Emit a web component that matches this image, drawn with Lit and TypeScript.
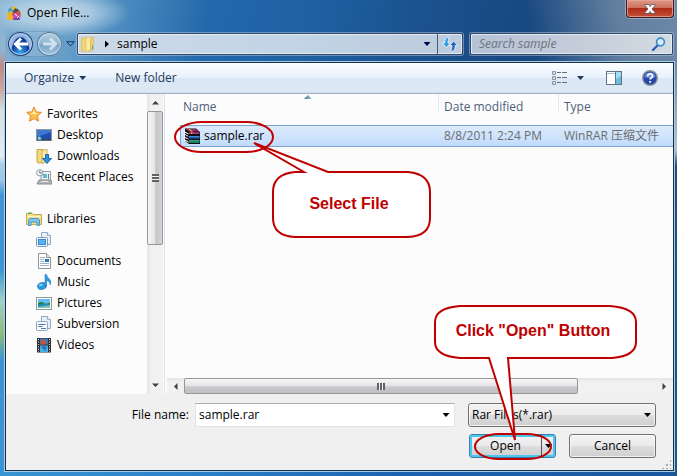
import { LitElement, html, css, svg } from "lit";
import { customElement, property, state } from "lit/decorators.js";

type Place = { icon: string; label: string; root?: boolean; gap?: boolean };

const places: Place[] = [
  { icon: "star", label: "Favorites", root: true },
  { icon: "desktop", label: "Desktop" },
  { icon: "downloads", label: "Downloads" },
  { icon: "recent", label: "Recent Places" },
  { icon: "libraries", label: "Libraries", root: true, gap: true },
  { icon: "library", label: "" },
  { icon: "documents", label: "Documents" },
  { icon: "music", label: "Music" },
  { icon: "pictures", label: "Pictures" },
  { icon: "subversion", label: "Subversion" },
  { icon: "videos", label: "Videos" },
];

const glyphs: Record<string, unknown> = {
  app: svg`
    <path d="M2 5q3-5 8-3l3 3-3 4-7 1z" fill="#3fa0dc"/>
    <path d="M6 2q4-2 5 1l-2 2-4-1z" fill="#e8c33a"/>
    <path d="M1 8l4-2 4 3v6H1z" fill="#e9b22e"/>
    <path d="M9 3l5 3-4 6-4-2z" fill="#5b4630"/>
    <path d="M7 8l4-1 4 4-3 4H7z" fill="#d44fa8"/>
    <path d="M8 13l5-1 1 3H7z" fill="#7c3fb0"/>
    <path d="M12 5l3 3-1 3-3-3z" fill="#d9572b"/>
    <path d="M9 9l2 2M11 13l2-2" stroke="#fff" stroke-width="1"/>`,
  star: svg`
    <path d="M8 1l2.100 4.900 5.200.5-3.900 3.500 1.100 5.300L8 12.500l-4.500 2.700 1.100-5.300L.7 6.400l5.200-.5z" fill="#fcc046" stroke="#e2842c" stroke-linejoin="round"/>
    <path d="M8 3l1.400 3.700 3.800.5L8 8.500 3 7.200l3.700-.5z" fill="#ffe9a0"/>`,
  desktop: svg`
    <rect x="0.5" y="2.500" width="15" height="11" fill="#b8c4d0" stroke="#8a97a5"/>
    <rect x="1" y="3" width="14" height="9" fill="#1f4fae"/>
    <path d="M1 3h14v2L1 10z" fill="#3f78d2"/>
    <path d="M1 12h14v1.500H1z" fill="#31455f"/>
    <circle cx="3.500" cy="11.500" r="2" fill="#4fb0e8"/><circle cx="3" cy="11" r="1" fill="#f4d13a"/>`,
  downloads: svg`
    <path d="M1 1.500h6l1 1v12l-6 .5-1-1z" fill="#f3d97e" stroke="#c9a546"/>
    <path d="M6 2.500l5-1v12l-5 2z" fill="#fae9a8" stroke="#cfae54"/>
    <path d="M9.500 6.500h3v4H15.500L11 15.500 6.500 10.500h3z" fill="#2e92e0" stroke="#1766ae"/>`,
  recent: svg`
    <path d="M5 2.500h9.500v9H5z" fill="#e7f0f3" stroke="#92a0a8"/>
    <path d="M7 5h4v4H7z" fill="#62b6cf"/><path d="M12 5h1v5h-1z" fill="#6d8792"/>
    <path d="M3 11h12l1 4H1z" fill="#b1b5b8" stroke="#878b8f"/>
    <path d="M5 12.500h7" stroke="#e6e8ea"/>
    <circle cx="3.800" cy="3.800" r="3.200" fill="#f6f8f9" stroke="#8b979e"/>
    <path d="M3.800 1.800v2.200h2" stroke="#5b6c77" fill="none"/>`,
  libraries: svg`
    <path d="M.5 2.500h6l1 1h8v10H.5z" fill="#f3dd8c" stroke="#c8a850"/>
    <path d="M2 1.500h4v1.500H2z" fill="#54b648"/>
    <path d="M1 5.500h14" stroke="#fff4c8"/>
    <path d="M2.500 14.500V10q0-2.500 2.500-2.500h6q2.500 0 2.500 2.500v4.500H11V11H5v3.500z" fill="#7fcbee" stroke="#4495c4"/>`,
  library: svg`
    <path d="M5.500.5h6l3 3v9h-9z" fill="#e8f0f7" stroke="#91a9c3"/>
    <path d="M11.500.5v3h3" fill="#fff" stroke="#91a9c3"/>
    <rect x=".5" y="5.500" width="11" height="9" rx="1" fill="#f0f6fb" stroke="#7c9abc"/>
    <rect x="2.500" y="7.500" width="7" height="5" fill="#5cb4f0" stroke="#3687cc"/>`,
  documents: svg`
    <path d="M2.500.5h8l4 4v11h-12z" fill="#fff" stroke="#8e9498"/>
    <path d="M10.500.5v4h4" fill="#e2e6e8" stroke="#8e9498"/>
    <path d="M4 4.500h5M4 6.500h4M4 8.500h4M4 10.500h9M4 12.500h9" stroke="#9fb2c8"/>
    <rect x="9" y="6" width="4" height="3" fill="#2f78b8"/>`,
  music: svg`
    <ellipse cx="6" cy="12" rx="4.500" ry="3.400" transform="rotate(-15 6 12)" fill="#2a9ae2" stroke="#1a70b4" stroke-width=".6"/>
    <path d="M9 .5h1.500q.5 3 3 4.500 2.500 2.500.5 6 .3-3.500-3.500-4.500V12H9z" fill="#2f9ee4" stroke="#1a70b4" stroke-width=".5"/>
    <ellipse cx="4.800" cy="11" rx="2" ry="1" fill="#8fd3f8"/>`,
  pictures: svg`
    <rect x=".5" y="2.500" width="15" height="12" fill="#fff" stroke="#90989e"/>
    <rect x="2" y="4" width="12" height="9" fill="#64bdf0"/>
    <path d="M2 8q3-2 6 0t6-1v2H2z" fill="#2f7d52"/>
    <path d="M2 9h12v4H2z" fill="#2389ae"/><path d="M2 12l12-2v3H2z" fill="#79c6a8"/>`,
  subversion: svg`
    <path d="M5.500.5h6l3 3v9h-9z" fill="#e8f0f7" stroke="#91a9c3"/>
    <path d="M11.500.5v3h3" fill="#fff" stroke="#91a9c3"/>
    <rect x=".5" y="5.500" width="11" height="9" rx="1" fill="#f4f8fc" stroke="#8ea8c6"/>
    <path d="M2.500 8.500h7M2.500 10.500h4M5 12.500h5" stroke="#5673ac"/>`,
  videos: svg`
    <rect x="1" y="1" width="14" height="14.500" fill="#2a2f35"/>
    <rect x="4" y="1.500" width="8" height="6" fill="#3f78b8"/><rect x="4" y="8.500" width="8" height="6.500" fill="#49b0ea"/>
    <path d="M6 2l5 3-2 2.500H4z" fill="#c0583c"/><path d="M5 10q3-2 6 0l-2 4z" fill="#2e74b4"/>
    <path d="M2.500 2v13M13.500 2v13" stroke="#e8ecef" stroke-dasharray="1 1.500"/>`,
  folder: svg`
    <path d="M.5 2.500L5.500 1v14l-4 .5-1-1z" fill="#f0d472" stroke="#d8b85a" stroke-width=".7"/>
    <path d="M5 2l4.500-1v13L5 15.500z" fill="#fbeaa4" stroke="#dcbf68" stroke-width=".7"/>
    <path d="M9.500 2.500l3-1.500v12.500L8 15.500l1.500-2z" fill="#f0d26c" stroke="#d8b85a" stroke-width=".7"/>
    <path d="M11.500 9.500v4" stroke="#4ca0d8"/>`,
  rar: svg`
    <path d="M1 .5h11l4 3.500v12H5L1 13z" fill="#101014"/>
    <path d="M1.500 1H11l4 2.500H5z" fill="#a0246e"/>
    <path d="M5 4.200h10.500v1.800H5z" fill="#b02c7c"/>
    <path d="M0 3l4.500 2.500v1L0 4.200zM0 5.500L4.500 8v.800L0 6.500zM0 8.300l4.500 2.500v.800L0 9.500zM0 11l4.500 2.500v1L0 12.200z" fill="#fff"/>
    <path d="M5 8h10.500v2.600H5z" fill="#1c5cb0"/><path d="M5 8h10.500v.6H5z" fill="#64a4dc"/>
    <path d="M5 12.400h10.500v2.600H5z" fill="#128464"/><path d="M5 12.400h10.500v.6H5z" fill="#68ccac"/>
    <path d="M4.500 1h1.500l3 2.500H7z" fill="#e0b83c"/><path d="M7 4.200h1.500V6H7z" fill="#e0b83c"/>`,
  refresh: svg`
    <path d="M6.500 1q-3.800.5-3.800 6H.2L4.500 11.500l4-4.500H6q0-3 1.200-6z" fill="#2f9fe0" stroke="#f4f9fd" stroke-width=".8"/>
    <path d="M9.500 15.500q3.800-.5 3.800-6h2.500L11.500 5l-4 4.500H10q0 3-1.200 6z" fill="#2367b8" stroke="#f4f9fd" stroke-width=".8"/>`,
  search: svg`
    <path d="M6.500 9.500L2 14" stroke="#2a5fae" stroke-width="2.400" stroke-linecap="round"/>
    <circle cx="9.500" cy="6" r="3.900" fill="#dcecf8" stroke="#3a8bcc" stroke-width="1.700"/>`,
  views: svg`
    <path d="M1.500 1.500h3v3h-3zM1.500 6.500h3v3h-3zM1.500 11.500h3v3h-3z" fill="#fff" stroke="#8797a8"/>
    <path d="M2.500 3h1M2.500 13h1" stroke="#4b78a8"/><path d="M2.500 8h1" stroke="#c8462e"/>
    <path d="M6 2.500h4M11 2.500h5M6 7.500h4M11 7.500h5M6 12.500h4M11 12.500h5" stroke="#5c6f85"/>`,
  pane: svg`
    <rect x=".5" y="1.500" width="15" height="13" fill="#fff" stroke="#5f7488"/>
    <path d="M1 3.500h14" stroke="#a9b8c6"/><rect x="10" y="2" width="5" height="12" fill="#6fbbdc"/>
    <path d="M10 2h5v4l-5 3z" fill="#a6dcef"/><path d="M9.500 2v12" stroke="#4e7e9c"/>`,
  help: svg`
    <circle cx="8" cy="8" r="7.300" fill="#2848a8" stroke="#8d94a0" stroke-width="1.400"/>
    <path d="M2.500 7a5.600 5.600 0 0 1 11 0q-5 2.500-11 0z" fill="#6c8ce0"/>
    <path d="M5.700 6.300q0-2.500 2.400-2.500t2.400 2.100q0 1.300-1.300 2-1 .6-1 1.700" fill="none" stroke="#fff" stroke-width="1.700"/>
    <path d="M7.200 11h1.900v1.700H7.200z" fill="#fff"/>`,
};

@customElement("ui-icon")
class UiIcon extends LitElement {
  @property() name = "";
  static styles = css`
    :host { display: block; flex: none; width: 16px; height: 16px; }
    .glyph { display: block; width: 100%; height: 100%; }
  `;
  render() {
    return html`<svg class="glyph" viewBox="0 0 16 16" aria-hidden="true">${glyphs[this.name]}</svg>`;
  }
}

@customElement("ui-scrollbar")
class UiScrollbar extends LitElement {
  @property({ reflect: true }) direction = "vertical";
  static styles = css`
    :host { display: flex; flex: none; background: linear-gradient(90deg, #e6e6e6, #f1f1f1 30%, #f1f1f1); }
    :host([direction="vertical"]) { flex-direction: column; width: 16px; }
    :host([direction="horizontal"]) { height: 16px; background: linear-gradient(#e6e6e6, #f1f1f1 30%, #f1f1f1); }
    .end { flex: none; width: 16px; height: 17px; display: grid; place-items: center; }
    :host([direction="horizontal"]) .end { width: 17px; height: 16px; }
    .arrow { display: block; width: 7px; height: 7px; fill: #404040; }
    .thumb { box-sizing: border-box; border: 1px solid #979797; border-radius: 2px; display: grid; place-items: center;
      flex: 1; background: linear-gradient(90deg, #f6f6f6, #e4e4e6 50%, #c4c5c9 55%, #d2d3d6); }
    :host([direction="horizontal"]) .thumb { flex: 5; background: linear-gradient(#f6f6f6, #e4e4e6 50%, #c8c9cc 55%, #c0c1c5); }
    .rest { flex: 1; }
    .grip { width: 7px; height: 8px; background: repeating-linear-gradient(#606266 0 2px, #f4f4f4 2px 3px); }
    :host([direction="horizontal"]) .grip { width: 8px; height: 7px; background: repeating-linear-gradient(90deg, #606266 0 2px, #f4f4f4 2px 3px); }
  `;
  render() {
    const v = this.direction === "vertical";
    return html`
      <div class="end"><svg class="arrow" viewBox="0 0 7 7"><path d=${v ? "M0 5.500L3.500 2 7 5.500z" : "M5.500 0L2 3.500 5.500 7z"} /></svg></div>
      <div class="thumb"><div class="grip"></div></div>
      <div class="rest"></div>
      <div class="end"><svg class="arrow" viewBox="0 0 7 7"><path d=${v ? "M0 1.500L3.500 5 7 1.500z" : "M1.500 0L5 3.500 1.500 7z"} /></svg></div>`;
  }
}

@customElement("app-root")
class AppRoot extends LitElement {
  @state() fileName = "sample.rar";

  static styles = css`
    :host {
      position: relative; box-sizing: border-box; display: flex; flex-direction: column; min-height: 100vh;
      padding: 0 2px 4px 4px; font: 12px/20px "Open Sans", "Noto Sans CJK SC", sans-serif; color: #000;
      background:
        linear-gradient(#7fb0d000 0, #8fb6d0 50px, #c08a88 66px, #c9a8a4 90px, #d4dfe2 110px, #e4eef2 155px, #a9cde8 165px, #9cc6e6 180px, #3f97d4 195px, #3c96d2 270px, #9fd0c8 300px, #8fb87c 335px, #3c94d0 360px, #3a94d4 100%) 0 0 / 5px 100% no-repeat,
        linear-gradient(#6c88a800 0, #6c88a8 60px, #8ca0b8 100px, #b4c2d0 150px, #1b4d84 166px, #1c5694 100%) 100% 0 / 4px 100% no-repeat,
        linear-gradient(90deg, #3a94d4, #2a80c8 30%, #1c62b0 60%, #1a58a0) 0 100% / 100% 6px no-repeat,
        radial-gradient(ellipse 75px 24px at 55px 13px, #c8dcea, #bcd6e8c0 50%, #b4d2e800),
        linear-gradient(258deg, #6c88a8 0, #64809f 60px, #64809f00 150px),
        linear-gradient(98deg, #86b2d2 0, #5c98c6 90px, #2268ab 210px, #1f62a4 300px, #1b5492 400px, #184880 520px, #1b4a82 100%);
    }
    button, input, select { font: inherit; color: inherit; margin: 0; padding: 0; }
    button { background: none; border: 0; }
    .titlebar { display: flex; justify-content: space-between; height: 32px; padding-left: 2px; }
    .title { display: flex; align-items: center; gap: 5px; height: 26px; margin: 0; font-size: 12px; font-weight: 400; }
    .close { box-sizing: border-box; width: 48px; height: 18px; display: grid; place-items: center; border: 1px solid #3c1d28; border-top: 0;
      border-radius: 0 0 4px 4px; box-shadow: inset 0 0 0 1px #e8a898c0, 0 0 0 1px #c4d0dc80;
      background: linear-gradient(#dc9a8c, #cc6c58 48%, #b02c16 50%, #c45038); margin-right: 1px; }
    .cross { width: 12px; height: 10px; }
    .navbar { display: flex; align-items: center; height: 24px; padding: 0 2px 5px 3px; }
    .travel { display: flex; box-sizing: border-box; gap: 4px; height: 24px; width: 56px; padding: 0 1px; border-radius: 12px; background: #a8c8e050; box-shadow: 0 0 0 1px #5d8fb880; }
    .round { box-sizing: border-box; width: 25px; height: 24px; border-radius: 50%; display: grid; place-items: center; border: 1px solid #1c3c78; }
    .back { background: radial-gradient(ellipse at 50% 100%, #38b4f4, #1450a8 45%, #0c3088 55%, #8cb0e0 60%, #c4d8f0); box-shadow: inset 0 0 0 1px #b4d0ec; }
    .forward { background: linear-gradient(#b4cee0, #90b4d0 50%, #78a4c8 52%, #a0c4dc); border-color: #5a7c9c; box-shadow: inset 0 0 0 1px #c8dcec; }
    .arrow { width: 16px; height: 16px; }
    .history { width: 14px; height: 20px; display: grid; place-items: center; }
    .tri { display: block; width: 7px; height: 4px; background: currentColor; clip-path: polygon(0 0, 100% 0, 50% 100%); }
    .outline { width: 9px; height: 6px; }
    .field { box-sizing: border-box; height: 22px; border: 1px solid #34496a; border-radius: 2px; display: flex; align-items: center;
      background: linear-gradient(90deg, #ccd9e7, #c3d5e6 50%, #bccbdd); box-shadow: 0 0 0 1px #b4cce480, inset 0 0 0 1px #eef4fac0; }
    .address { flex: 1; margin-right: 7px; padding-left: 3px; }
    .crumb { display: flex; align-items: center; gap: 8px; flex: 1; }
    .step { width: 4px; height: 7px; background: #000; clip-path: polygon(0 0, 100% 50%, 0 100%); }
    .drop { width: 20px; height: 20px; display: grid; place-items: center; color: #000050; }
    .refresh { box-sizing: border-box; width: 25px; height: 20px; border-left: 1px solid #4a5a78; display: grid; place-items: center; }
    .search { width: 203px; padding: 0 5px 0 8px; background: linear-gradient(90deg, #b4c2d6, #c4ccd9 50%, #d2dae2); }
    .query { flex: 1; min-width: 0; border: 0; background: none; outline: 0; font-style: italic; }
    .query::placeholder { color: #6c747c; opacity: 1; }
    .client { flex: 1; display: flex; flex-direction: column; border: 1px solid #16304c; box-shadow: 0 0 0 1px #a8cce4; background: #f0f0f0; margin: 1px 1px 1px; }
    .toolbar { display: flex; align-items: center; height: 30px; padding: 0 15px 0 18px; color: #1e395b; border-bottom: 1px solid #a0b0c8;
      background: linear-gradient(#fcfeff, #e8f2fc 49%, #dce7f5 50%, #dde8f5 94%, #cfdcec); }
    .organize { display: flex; align-items: center; gap: 5px; margin-right: 29px; }
    .spacer { flex: 1; }
    .views { display: flex; align-items: center; gap: 10px; margin-right: 22px; }
    .preview { margin-right: 20px; }
    .panes { flex: 1; display: flex; background: #fcfcfc; }
    .places { width: 141px; box-sizing: border-box; margin: 0; padding: 9px 0 0 20px; list-style: none; }
    .place { display: flex; align-items: center; height: 21px; gap: 5px; padding-left: 10px; color: #000; text-decoration: none; white-space: nowrap; }
    .root { padding-left: 0; }
    .gap { margin-top: 21px; }
    .files { position: relative; flex: 1; display: flex; flex-direction: column; border-left: 1px solid #d0e2f4; margin-left: 1px; padding-left: 2px; }
    .list { flex: 1; padding-left: 13px; }
    .table { width: 100%; border-collapse: separate; border-spacing: 0; table-layout: fixed; }
    .table th { position: relative; height: 28px; padding: 3px 0 0 6px; vertical-align: top; text-align: left; font-weight: 400; color: #4c607a; }
    .date { width: 114px; }
    .type { width: 109px; }
    .table th + th { background: linear-gradient(#dcebf8 60%, #dcebf800) 0 0 / 1px 22px no-repeat; }
    .table th:first-child, .table td:first-child { padding-left: 3px; }
    .sort { position: absolute; left: 50%; top: 1px; margin-left: -5px; width: 8px; height: 4px; background: linear-gradient(90deg, #3c6478, #a8d8f0); clip-path: polygon(50% 0, 100% 100%, 0 100%); }
    .table td { height: 20px; padding: 0 0 0 6px; color: #6d6d6d; white-space: nowrap; border: 1px solid #7da2ce; border-width: 1px 0; background: linear-gradient(#dcebfc, #c1dbfc); }
    .table td:first-child { border-left-width: 1px; color: #000; }
    .file { display: flex; align-items: center; gap: 4px; }
    .form { display: flex; flex-direction: column; gap: 7px; padding: 9px 17px 12px 0; position: relative; }
    .line { display: flex; justify-content: flex-end; align-items: center; }
    .label { width: 183px; text-align: right; margin-right: 6px; }
    .combo { flex: 1; display: flex; box-sizing: border-box; height: 24px; margin-right: 13px; background: #fff; border: 1px solid #e2e3ea; border-top-color: #abadb3; }
    .name { flex: 1; min-width: 0; border: 0; outline: 0; background: none; padding-left: 3px; }
    .pick { width: 16px; display: grid; place-items: center; }
    .filter { position: relative; width: 188px; }
    .select { appearance: none; box-sizing: border-box; width: 100%; height: 24px; padding-left: 3px; }
    .select, .push { border: 1px solid #707070; border-radius: 3px; background: linear-gradient(#f2f2f2, #ebebeb 49%, #dddddd 50%, #cfcfcf); box-shadow: inset 0 0 0 1px #fcfcfcc0; display: block; }
    .mark { position: absolute; right: 5px; top: 10px; pointer-events: none; }
    .actions { gap: 13px; }
    .push { box-sizing: border-box; width: 87px; height: 24px; }
    .split { display: flex; border-color: #3c7fb1; box-shadow: inset 0 0 0 2px #48c8f0; }
    .open { flex: 1; }
    .more { width: 14px; display: grid; place-items: center; border-left: 1px solid #555; }
    .corner { position: absolute; right: 2px; bottom: 1px; width: 10px; height: 10px; background: radial-gradient(circle at 2px 2px, #a8a8a8 1px, #a8a8a800 1px) 0 0 / 4px 4px; clip-path: polygon(100% 0, 100% 100%, 0 100%); }
    .note { position: absolute; pointer-events: none; stroke: #c00000; stroke-width: 2px; fill: none; }
    .bubble { fill: #fff; }
    .say { font: bold 16px "Liberation Sans", Arial, sans-serif; fill: #c00000; stroke: none; text-anchor: middle; }
    .choose { left: 7px; top: 24px; width: 262px; height: 124px; }
    .confirm { right: 35px; bottom: 12px; width: 212px; height: 164px; }
  `;

  render() {
    return html`
      <header class="titlebar">
        <h1 class="title"><ui-icon name="app"></ui-icon>Open File...</h1>
        <button class="close" aria-label="Close">
          <svg class="cross" viewBox="0 0 12 10"><path d="M1 .5h3.500L6 2.500 7.500.5H11v1L8 5l3 3.500v1H7.500L6 7.500 4.500 9.500H1v-1L4 5 1 1.500z" fill="#fff" stroke="#4c4c5c" stroke-width=".8"/></svg>
        </button>
      </header>
      <nav class="navbar" aria-label="Location">
        <div class="travel">
          <button class="round back" aria-label="Back"><svg class="arrow" viewBox="0 0 16 16"><path d="M8 2.500L2.500 8 8 13.500M3 8h12" fill="none" stroke="#fff" stroke-width="3"/></svg></button>
          <button class="round forward" aria-label="Forward"><svg class="arrow" viewBox="0 0 16 16"><path d="M8 2.500L13.500 8 8 13.500M13 8H1" fill="none" stroke="#d0e0ec" stroke-width="3"/></svg></button>
        </div>
        <button class="history" aria-label="Recent locations"><svg class="outline" viewBox="0 0 9 6"><path d="M.8.7h7.400L4.500 5z" fill="#5ca4d8" stroke="#103868"/></svg></button>
        <div class="field address">
          <button class="crumb"><ui-icon name="folder"></ui-icon><span class="step"></span>sample</button>
          <button class="drop" aria-label="Previous locations"><span class="tri"></span></button>
          <button class="refresh" aria-label="Refresh"><ui-icon name="refresh"></ui-icon></button>
        </div>
        <div class="field search">
          <input class="query" type="text" placeholder="Search sample" aria-label="Search sample" />
          <ui-icon name="search"></ui-icon>
        </div>
      </nav>
      <main class="client">
        <div class="toolbar">
          <button class="organize">Organize <span class="tri"></span></button>
          <button>New folder</button>
          <span class="spacer"></span>
          <button class="views" aria-label="Change view"><ui-icon name="views"></ui-icon><span class="tri"></span></button>
          <button class="preview" aria-label="Preview pane"><ui-icon name="pane"></ui-icon></button>
          <button aria-label="Help"><ui-icon name="help"></ui-icon></button>
        </div>
        <div class="panes">
          <ul class="places">
            ${places.map((p) => html`<li class=${p.gap ? "gap" : ""}>
              <a class="place ${p.root ? "root" : ""}" href="#"><ui-icon name=${p.icon}></ui-icon>${p.label}</a></li>`)}
          </ul>
          <ui-scrollbar direction="vertical"></ui-scrollbar>
          <section class="files">
            <div class="list">
              <table class="table">
                <thead><tr><th>Name<span class="sort"></span></th><th class="date">Date modified</th><th class="type">Type</th></tr></thead>
                <tbody><tr><td><span class="file"><ui-icon name="rar"></ui-icon>sample.rar</span></td><td>8/8/2011 2:24 PM</td><td>WinRAR 压缩文件</td></tr></tbody>
              </table>
            </div>
            <ui-scrollbar direction="horizontal"></ui-scrollbar>
            <svg class="note choose" viewBox="172 118 262 124">
              <rect x="175" y="122" width="98" height="30" rx="27" ry="15" />
              <path class="bubble" d="M304 172L254 143L328 172H408Q430 174 430 192V218Q430 236 408 237H295Q273 236 273 218V192Q273 174 295 172z" />
              <text class="say" x="349" y="209">Select File</text>
            </svg>
          </section>
        </div>
        <form class="form" @submit=${(e: Event) => e.preventDefault()}>
          <div class="line">
            <label class="label" for="name">File name:</label>
            <div class="combo">
              <input class="name" id="name" type="text" .value=${this.fileName} @input=${(e: Event) => (this.fileName = (e.target as HTMLInputElement).value)} />
              <button class="pick" type="button" aria-label="Recent names"><span class="tri"></span></button>
            </div>
            <div class="filter">
              <select class="select" aria-label="File type"><option>Rar Files(*.rar)</option></select>
              <span class="tri mark"></span>
            </div>
          </div>
          <div class="line actions">
            <div class="push split"><button class="open">Open</button><button class="more" type="button" aria-label="Open options"><span class="tri"></span></button></div>
            <button class="push" type="button">Cancel</button>
          </div>
          <span class="corner"></span>
        </form>
      </main>
      <svg class="note confirm" viewBox="430 300 212 164">
        <rect x="475" y="434" width="76" height="25" rx="24" ry="12.500" />
        <path class="bubble" d="M460 306H610Q636 308 636 322V342Q636 356 612 358H508L515 440L489 358H460Q435 356 435 342V322Q435 308 460 306z" />
        <text class="say" x="533" y="336">Click "Open" Button</text>
      </svg>`;
  }
}
